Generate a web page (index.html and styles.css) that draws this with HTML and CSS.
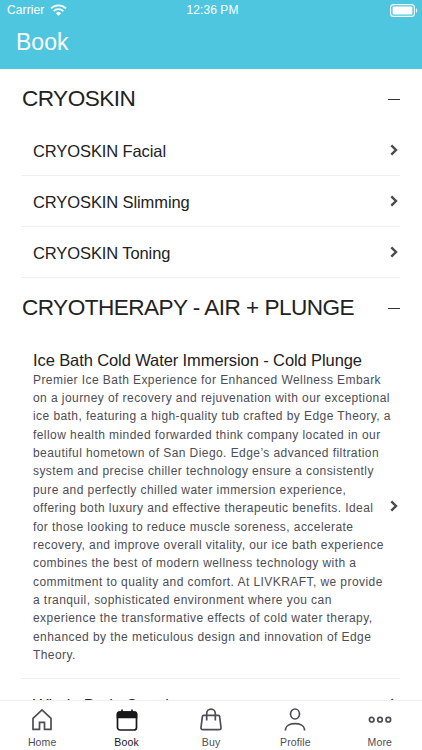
FILE: index.html
```html
<!DOCTYPE html>
<html lang="en">
<head>
  <meta charset="UTF-8" />
  <meta name="viewport" content="width=device-width, initial-scale=1.0"/>
  <title>Book</title>
  <link rel="stylesheet" href="styles.css">
</head>
<body>
  <div class="app">
    <header>
      <div class="status-bar">
        <div class="carrier">
          <span>Carrier</span>
          <svg class="wifi" viewBox="0 0 17 12" width="17" height="12">
            <path d="M1 4.4a10.7 10.7 0 0 1 15 0M3.7 7.1a6.9 6.9 0 0 1 9.6 0" fill="none" stroke="#fff" stroke-width="1.9"/>
            <path d="M8.5 11.8L5.9 9.2a3.8 3.8 0 0 1 5.2 0z" fill="#fff"/>
          </svg>
        </div>
        <span class="time">12:36 PM</span>
        <svg class="battery" viewBox="0 0 28 13" width="28" height="13">
          <rect x="0.6" y="0.6" width="23.8" height="11.8" rx="3" fill="none" stroke="#fff" stroke-width="1.1"/>
          <rect x="2.6" y="2.6" width="19.8" height="7.8" rx="1" fill="#fff"/>
          <path d="M26 4.2v4.6c1.7-.8 1.7-3.8 0-4.6z" fill="#fff"/>
        </svg>
      </div>
      <h1>Book</h1>
    </header>

    <main>
      <section>
        <div class="section-title">
          <h2>CRYOSKIN</h2>
          <span class="minus"></span>
        </div>
        <ul>
          <li>
            <h3>CRYOSKIN Facial</h3>
            <svg class="chevron" viewBox="0 0 8 12" width="8" height="12"><path d="M1.3 1.3L6 6l-4.7 4.7"/></svg>
          </li>
          <li>
            <h3>CRYOSKIN Slimming</h3>
            <svg class="chevron" viewBox="0 0 8 12" width="8" height="12"><path d="M1.3 1.3L6 6l-4.7 4.7"/></svg>
          </li>
          <li>
            <h3>CRYOSKIN Toning</h3>
            <svg class="chevron" viewBox="0 0 8 12" width="8" height="12"><path d="M1.3 1.3L6 6l-4.7 4.7"/></svg>
          </li>
        </ul>
      </section>

      <section>
        <div class="section-title">
          <h2>CRYOTHERAPY - AIR + PLUNGE</h2>
          <span class="minus"></span>
        </div>
        <ul>
          <li class="detailed">
            <div class="info">
              <h3>Ice Bath Cold Water Immersion - Cold Plunge</h3>
              <p>Premier Ice Bath Experience for Enhanced Wellness Embark<br>
                on a journey of recovery and rejuvenation with our exceptional<br>
                ice bath, featuring a high-quality tub crafted by Edge Theory, a<br>
                fellow health minded forwarded think company located in our<br>
                beautiful hometown of San Diego. Edge’s advanced filtration<br>
                system and precise chiller technology ensure a consistently<br>
                pure and perfectly chilled water immersion experience,<br>
                offering both luxury and effective therapeutic benefits. Ideal<br>
                for those looking to reduce muscle soreness, accelerate<br>
                recovery, and improve overall vitality, our ice bath experience<br>
                combines the best of modern wellness technology with a<br>
                commitment to quality and comfort. At LIVKRAFT, we provide<br>
                a tranquil, sophisticated environment where you can<br>
                experience the transformative effects of cold water therapy,<br>
                enhanced by the meticulous design and innovation of Edge<br>
                Theory.</p>
            </div>
            <svg class="chevron" viewBox="0 0 8 12" width="8" height="12"><path d="M1.3 1.3L6 6l-4.7 4.7"/></svg>
          </li>
          <li>
            <h3>Whole Body Creation</h3>
            <svg class="chevron" viewBox="0 0 8 12" width="8" height="12"><path d="M1.3 1.3L6 6l-4.7 4.7"/></svg>
          </li>
        </ul>
      </section>
    </main>

    <nav>
      <a class="tab">
        <svg viewBox="0 0 24 24" width="24" height="24">
          <path d="M3 10.3L12 2l9 8.3V21.3h-6.5v-7h-5v7H3z"/>
        </svg>
        <span>Home</span>
      </a>
      <a class="tab active">
        <svg viewBox="0 0 24 24" width="24" height="24">
          <rect x="2.5" y="4" width="19" height="18" rx="2.5"/>
          <path class="solid" d="M2.5 9.5V6q0-2 2-2h15q2 0 2 2v3.500z"/>
          <path d="M7 1.5V5M17 1.5V5"/>
        </svg>
        <span>Book</span>
      </a>
      <a class="tab">
        <svg viewBox="0 0 24 24" width="24" height="24">
          <path d="M4.6 7.3h14.8q1 0 1.2 1l1.4 11.2q.2 2.2-2 2.2H4q-2.2 0-2-2.2L3.4 8.3q.2-1 1.2-1z"/>
          <path d="M7.7 12.500V5.5a4.300 4.300 0 0 1 8.600 0V12.500"/>
        </svg>
        <span>Buy</span>
      </a>
      <a class="tab">
        <svg viewBox="0 0 24 24" width="24" height="24">
          <ellipse cx="12" cy="6" rx="4.5" ry="5"/>
          <path d="M2.500 22.500v-1.500c1-7.200 18-7.200 19 0v1.500"/>
        </svg>
        <span>Profile</span>
      </a>
      <a class="tab">
        <svg viewBox="0 0 24 24" width="24" height="24">
          <circle cx="3.700" cy="11.700" r="2.300"/>
          <circle cx="12" cy="11.700" r="2.300"/>
          <circle cx="20.300" cy="11.700" r="2.300"/>
        </svg>
        <span>More</span>
      </a>
    </nav>
  </div>
</body>
</html>
```

FILE: styles.css
```css
:root {
  --primary: #4ec6e0;
  --text-color: #222;
  --muted: #4d4d55;
  --line: #efefef;
}

* {
  box-sizing: border-box;
}

body {
  margin: 0;
  font-family: "Liberation Sans", Arial, sans-serif;
  color: var(--text-color);
  background: #fff;
}

.app {
  height: 750px;
  display: flex;
  flex-direction: column;
  overflow: hidden;
}

header {
  flex: none;
  height: 69px;
  background: var(--primary);
  color: #fff;
}

.status-bar {
  display: grid;
  grid-template-columns: 1fr auto 1fr;
  align-items: center;
  height: 20px;
  padding: 0 4px 0 7px;
  font-size: 12px;
  letter-spacing: 0.1px;
}

.carrier {
  display: flex;
  align-items: center;
  gap: 6px;
}

.battery {
  justify-self: end;
}

h1 {
  margin: 9px 0 0 16px;
  font-size: 23px;
  line-height: 27px;
  font-weight: normal;
}

main {
  flex: 1;
  min-height: 0;
  overflow: hidden;
  padding: 0 22px 0 21px;
}

.section-title {
  display: flex;
  align-items: center;
  justify-content: space-between;
  height: 56px;
  padding-top: 2px;
}

h2 {
  margin: 0;
  padding: 2px 0 0 1px;
  font-size: 22.6px;
  font-weight: normal;
  letter-spacing: -0.55px;
}

.minus {
  width: 12px;
  height: 1.5px;
  margin-top: 3px;
  background: #333;
}

ul {
  list-style: none;
  margin: 0;
  padding: 0;
}

li {
  display: flex;
  align-items: center;
  justify-content: space-between;
  height: 51px;
  padding: 0 2px 0 12px;
  border-bottom: 1px solid var(--line);
}

li.detailed {
  height: 345px;
}

h3 {
  margin: 0;
  padding-top: 2px;
  font-size: 16.5px;
  line-height: 20px;
  font-weight: normal;
  letter-spacing: -0.1px;
}

p {
  margin: 1px 0 0;
  font-size: 12px;
  line-height: 18.35px;
  letter-spacing: 0.43px;
  white-space: nowrap;
  color: var(--muted);
}

.info {
  width: 340px;
}

.chevron {
  flex: none;
  fill: none;
  stroke: #4a4a4a;
  stroke-width: 2.4;
}

nav {
  flex: none;
  display: flex;
  height: 50px;
  border-top: 1px solid var(--line);
  background: #fff;
}

.tab {
  flex: 1;
  display: flex;
  flex-direction: column;
  align-items: center;
  padding-top: 7px;
  font-size: 10.5px;
  line-height: 14px;
  letter-spacing: 0.15px;
  color: var(--muted);
}

.tab svg {
  fill: none;
  stroke: currentColor;
  stroke-width: 1.7;
}

.tab span {
  margin-top: 3px;
}

.tab .solid {
  fill: currentColor;
}

.tab.active {
  color: #18181c;
}
```
